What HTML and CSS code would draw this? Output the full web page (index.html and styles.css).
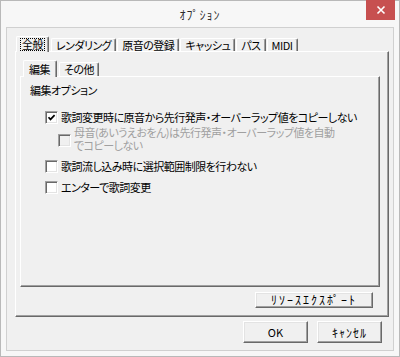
FILE: index.html
```html
<!DOCTYPE html>
<html>
<head>
    <meta charset="utf-8">
    <title>オプション</title>
    <link rel="stylesheet" href="styles.css">
</head>
<body>
    <div class="window">
        <div class="titlebar">
            <span></span>
            <span class="title">ｵﾌﾟｼｮﾝ</span>
            <button class="close-button">
                <svg width="10" height="10" viewBox="0 0 10 10">
                    <path d="M1.5 1.5 L8.5 8.5 M8.5 1.5 L1.5 8.5" stroke="#fff" stroke-width="1.6" fill="none"/>
                </svg>
            </button>
        </div>

        <div class="client">
            <div class="tabs main-tabs">
                <div class="tab selected"><span class="focus">全般</span></div>
                <div class="tab">レンダリング</div>
                <div class="tab">原音の登録</div>
                <div class="tab">キャッシュ</div>
                <div class="tab">パス</div>
                <div class="tab">MIDI</div>
            </div>

            <div class="panel main-panel">
                <div class="tabs sub-tabs">
                    <div class="tab selected">編集</div>
                    <div class="tab">その他</div>
                </div>

                <div class="panel sub-panel">
                    <div class="group-label">編集オプション</div>

                    <div class="check-row first">
                        <span class="checkbox">
                            <svg width="9" height="9" viewBox="0 0 9 9">
                                <polyline points="1.5,4.2 3.5,6.4 7.6,2.2" stroke="#000" stroke-width="1.7" fill="none"/>
                            </svg>
                        </span>
                        <span>歌詞変更時に原音から先行発声・オーバーラップ値をコピーしない</span>
                    </div>

                    <div class="check-row nested disabled">
                        <span class="checkbox"></span>
                        <span>母音(あいうえおをん)は先行発声・オーバーラップ値を自動<br>でコピーしない</span>
                    </div>

                    <div class="check-row">
                        <span class="checkbox"></span>
                        <span>歌詞流し込み時に選択範囲制限を行わない</span>
                    </div>

                    <div class="check-row">
                        <span class="checkbox"></span>
                        <span>エンターで歌詞変更</span>
                    </div>
                </div>

                <div class="panel-actions">
                    <button class="button export-button">ﾘｿｰｽｴｸｽﾎﾟｰﾄ</button>
                </div>
            </div>

            <div class="dialog-actions">
                <button class="button">OK</button>
                <button class="button kana">ｷｬﾝｾﾙ</button>
            </div>
        </div>
    </div>
</body>
</html>
```

FILE: styles.css
```css
body {
    margin: 0;
    padding: 0;
    background-color: #ffffff;
    font-family: "Noto Sans CJK JP", "Liberation Sans", sans-serif;
    font-size: 11px;
    font-feature-settings: "palt";
    letter-spacing: -0.5px;
    color: #000;
}

.window {
    width: 400px;
    height: 357px;
    box-sizing: border-box;
    border: 1px solid #b9b9b9;
    background-color: #f7f7f7;
    padding: 0 5px 5px;
    display: flex;
    flex-direction: column;
}

.titlebar {
    height: 26px;
    margin: 0 -5px;
    display: grid;
    grid-template-columns: 1fr auto 1fr;
    align-items: start;
}

.title {
    line-height: 27px;
    font-size: 12px;
    letter-spacing: 1px;
    color: #2b2b2b;
}

.close-button {
    justify-self: end;
    width: 29px;
    height: 20px;
    margin: -1px 4px 0 0;
    padding: 0;
    border: none;
    background-color: #c75050;
    display: flex;
    align-items: center;
    justify-content: center;
}

.client {
    flex: 1;
    border: 1px solid #d0d0d0;
    background-color: #f0f0f0;
    padding: 8px 11px 7px 0;
    display: flex;
    flex-direction: column;
}

/* tabs */

.tabs {
    display: flex;
    align-items: flex-end;
}

.main-tabs {
    height: 15px;
    margin-left: 9px;
}

.sub-tabs {
    height: 16px;
    margin-left: 3px;
}

.tab {
    height: 13px;
    line-height: 13px;
    padding: 0 4px;
    margin-right: 1px;
    box-sizing: border-box;
    border: 1px solid #fff;
    border-right-color: #696969;
    border-bottom: none;
    border-radius: 2px 2px 0 0;
    box-shadow: inset -1px 0 0 #a0a0a0;
    white-space: nowrap;
}

.sub-tabs .tab {
    height: 14px;
}

.tab.selected {
    position: relative;
    z-index: 1;
    height: 16px;
    margin-bottom: -1px;
    margin-right: 2px;
    background-color: #f0f0f0;
    padding-top: 1px;
}

.sub-tabs .tab.selected {
    height: 17px;
    padding: 2px 6px 0 5px;
}

.focus {
    display: inline-block;
    line-height: 11px;
    padding: 0 1px;
    outline: 1px dotted #000;
}

/* panels */

.panel {
    border: 1px solid #fff;
    border-right-color: #696969;
    border-bottom-color: #696969;
    box-shadow: inset -1px -1px 0 #a0a0a0;
}

.main-panel {
    height: 266px;
    box-sizing: border-box;
    margin-left: 8px;
    margin-right: -7px;
    padding: 8px 8px 8px 4px;
    display: flex;
    flex-direction: column;
}

.sub-panel {
    height: 211px;
    box-sizing: border-box;
    padding: 6px 0 0 9px;
}

.group-label {
    line-height: 14px;
}

.check-row {
    display: flex;
    align-items: center;
    gap: 3px;
    line-height: 14px;
    margin-top: 7px;
    margin-left: 15px;
}

.check-row.first {
    margin-top: 13px;
}

.check-row.nested {
    margin-top: 2px;
    margin-left: 28px;
    line-height: 13px;
}

.check-row.nested .checkbox {
    margin-top: 2px;
}

.check-row.disabled {
    color: #a0a0a0;
}

.checkbox {
    width: 13px;
    height: 13px;
    flex: none;
    box-sizing: border-box;
    border: 1px solid #a0a0a0;
    border-right-color: #fff;
    border-bottom-color: #fff;
    box-shadow: inset 1px 1px 0 #696969, inset -1px -1px 0 #e3e3e3;
    background-color: #fff;
    display: flex;
    align-items: center;
    justify-content: center;
}

.disabled .checkbox {
    background-color: #f0f0f0;
}

/* buttons */

.button {
    height: 22px;
    width: 65px;
    padding: 0;
    box-sizing: border-box;
    font-family: "Noto Sans CJK JP", "Liberation Sans", sans-serif;
    font-size: 11px;
    color: #000;
    background-color: #f0f0f0;
    border: 1px solid #fff;
    border-right-color: #696969;
    border-bottom-color: #696969;
    box-shadow: inset -1px -1px 0 #a0a0a0, inset 1px 1px 0 #e3e3e3;
}

.button.kana {
    font-size: 12px;
    letter-spacing: 1px;
}

.panel-actions {
    display: flex;
    justify-content: flex-end;
    margin-top: 5px;
}

.export-button {
    width: 118px;
    height: 16px;
    margin-right: 7px;
    font-size: 12px;
    letter-spacing: 2px;
    line-height: 14px;
}

.dialog-actions {
    display: flex;
    justify-content: flex-end;
    gap: 9px;
    margin-top: 4px;
}
```
